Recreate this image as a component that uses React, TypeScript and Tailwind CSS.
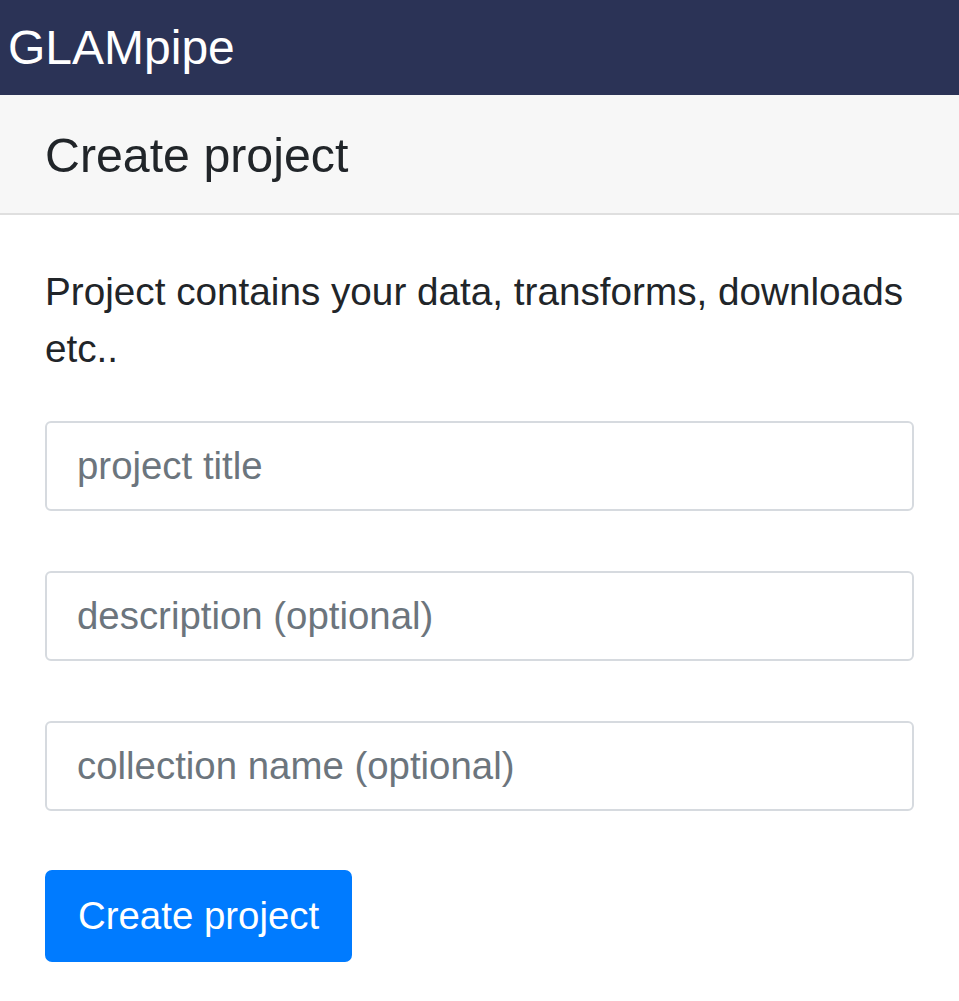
import { useState } from 'react'

export default function App() {
  const [title, setTitle] = useState('')
  const [description, setDescription] = useState('')
  const [collection, setCollection] = useState('')

  const handleSubmit = (e: React.FormEvent) => {
    e.preventDefault()
  }

  return (
    <div className="min-h-screen bg-white font-['Liberation_Sans',Arial,sans-serif] text-[#212529]">
      {/* Navbar */}
      <nav className="h-[95px] bg-[#2b3356] pl-[8px] pt-[13px]">
        <span className="text-[48px] leading-[70px] text-white">GLAMpipe</span>
      </nav>

      {/* Card header */}
      <div className="border-b-2 border-[#dfdfdf] bg-[#f7f7f7] px-[45px] pt-[32px] pb-[28px]">
        <h5 className="text-[48.3px] leading-[57.6px] font-normal text-[#212529]">Create project</h5>
      </div>

      {/* Card body */}
      <div className="px-[45px] pt-[48px]">
        <p className="mb-[43px] text-[38.7px] leading-[57.6px] text-[#212529]">
          Project contains your data, transforms, downloads etc..
        </p>

        <form onSubmit={handleSubmit} className="flex flex-col">
          <input
            type="text"
            placeholder="project title"
            value={title}
            onChange={(e) => setTitle(e.target.value)}
            className="mb-[60px] h-[90px] w-full rounded-[6px] border-2 border-[#d6dadf] bg-white px-[30px] text-[38.4px] text-[#495057] outline-none placeholder:text-[#6c757d]"
          />
          <input
            type="text"
            placeholder="description (optional)"
            value={description}
            onChange={(e) => setDescription(e.target.value)}
            className="mb-[60px] h-[90px] w-full rounded-[6px] border-2 border-[#d6dadf] bg-white px-[30px] text-[38.4px] text-[#495057] outline-none placeholder:text-[#6c757d]"
          />
          <input
            type="text"
            placeholder="collection name (optional)"
            value={collection}
            onChange={(e) => setCollection(e.target.value)}
            className="mb-[59px] h-[90px] w-full rounded-[6px] border-2 border-[#d6dadf] bg-white px-[30px] text-[38.4px] text-[#495057] outline-none placeholder:text-[#6c757d]"
          />
          <div>
            <button
              type="submit"
              className="h-[92px] rounded-[7px] bg-[#007bff] px-[33px] text-[38.4px] leading-[57.6px] text-white"
            >
              Create project
            </button>
          </div>
        </form>
      </div>
    </div>
  )
}
